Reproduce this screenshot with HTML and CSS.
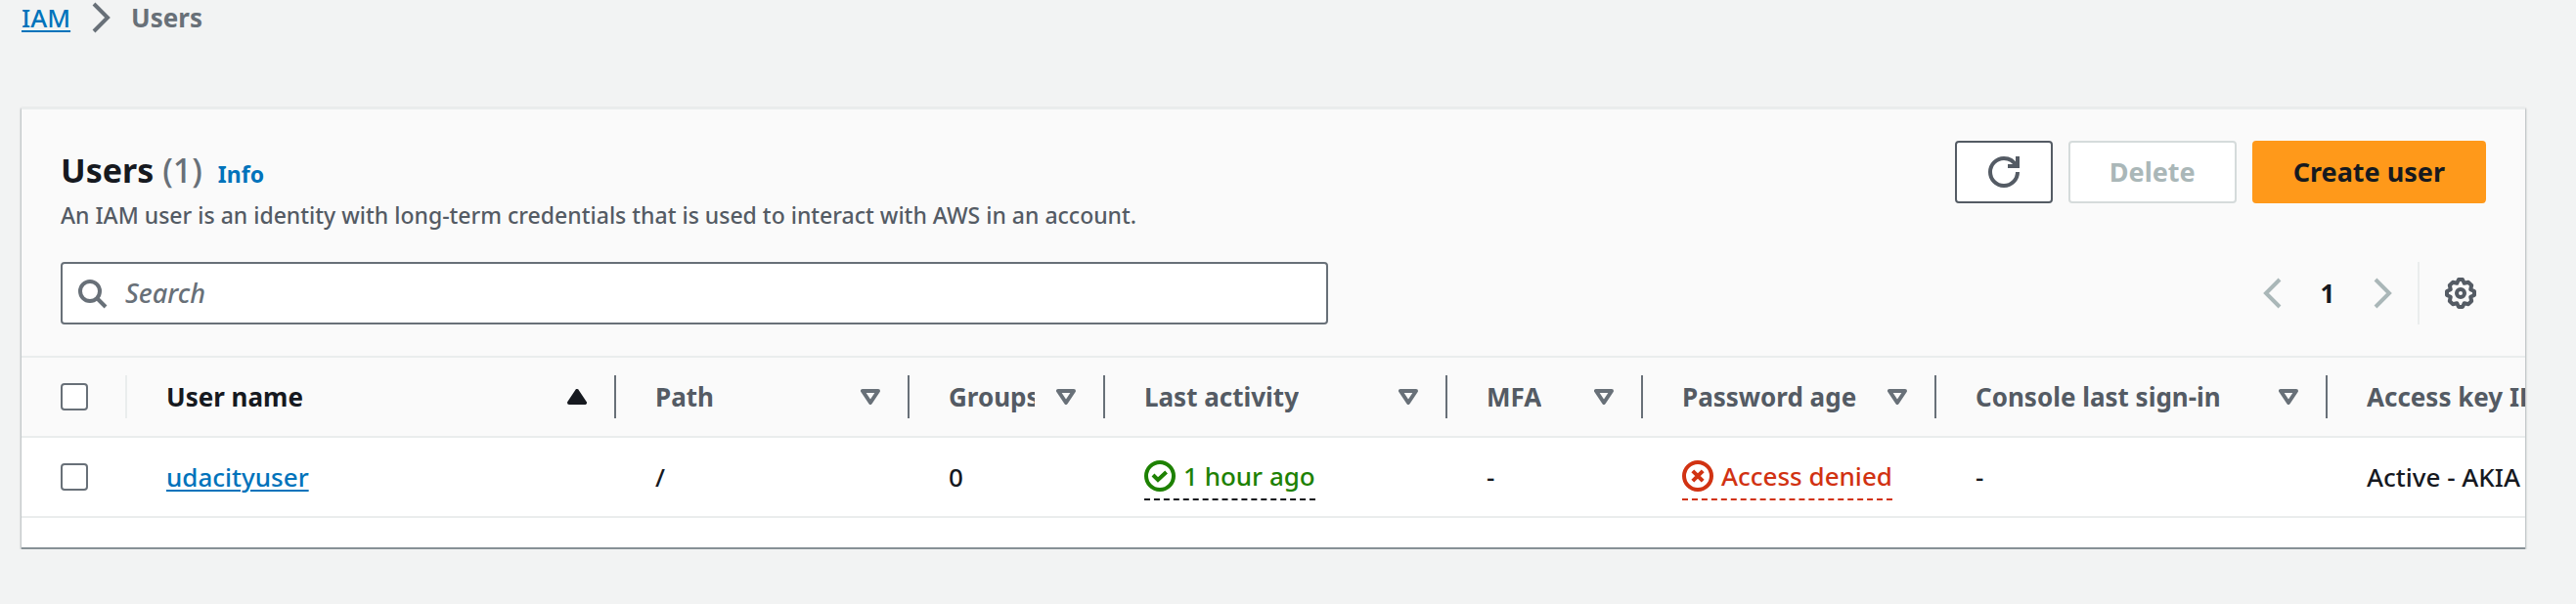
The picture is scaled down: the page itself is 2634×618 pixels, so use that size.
FILE: index.html
```html
<!DOCTYPE html>
<html lang="en">
<head>
<meta charset="utf-8">
<title>Users | IAM</title>
<link rel="stylesheet" href="styles.css">
</head>
<body>
<nav class="breadcrumb" aria-label="Breadcrumb">
  <a href="#">IAM</a>
  <svg class="icon" viewBox="0 0 16 16" aria-hidden="true"><path d="M4.500 1l7 7-7 7"/></svg>
  <span class="breadcrumb-current">Users</span>
</nav>
<main class="card">
  <header class="card-header">
    <div class="title-row">
      <div class="title-block">
        <div class="title-line">
          <h1 class="title">Users <span class="count">(1)</span></h1>
          <a class="info" href="#">Info</a>
        </div>
        <p class="description">An IAM user is an identity with long-term credentials that is used to interact with AWS in an account.</p>
      </div>
      <div class="actions">
        <button class="btn btn-icon" type="button" aria-label="Refresh">
          <svg class="icon" viewBox="0 0 16 16" aria-hidden="true"><path d="M15 8c0 3.870-3.130 7-7 7s-7-3.130-7-7 3.130-7 7-7c2.790 0 5.200 1.630 6.330 4"/><path d="M10 5h5V0"/></svg>
        </button>
        <button class="btn btn-disabled" type="button" disabled>Delete</button>
        <button class="btn btn-primary" type="button">Create user</button>
      </div>
    </div>
    <div class="tools-row">
      <label class="search">
        <svg class="icon" viewBox="0 0 16 16" aria-hidden="true"><circle cx="7" cy="7" r="5"/><path d="M10.500 10.500L15 15"/></svg>
        <input class="search-input" type="text" placeholder="Search" aria-label="Search">
      </label>
      <div class="pager">
        <button class="ghost ghost-muted" type="button" aria-label="Previous page" disabled><svg class="icon" viewBox="0 0 16 16" aria-hidden="true"><path d="M11.500 1l-7 7 7 7"/></svg></button>
        <button class="ghost page-number" type="button">1</button>
        <button class="ghost ghost-muted" type="button" aria-label="Next page" disabled><svg class="icon" viewBox="0 0 16 16" aria-hidden="true"><path d="M4.500 1l7 7-7 7"/></svg></button>
        <button class="ghost preferences" type="button" aria-label="Preferences"><svg class="icon icon-round" viewBox="0 0 16 16" aria-hidden="true"><path d="M7 1h2l.9 1.900L12 2.400 13.600 4l-.5 2.100L15 7v2l-1.900.9.5 2.100L12 13.600l-2.100-.5L9 15H7l-.9-1.900-2.100.5L2.400 12l.5-2.100L1 9V7l1.900-.9L2.400 4 4 2.400l2.100.5z"/><circle cx="8" cy="8" r="2"/></svg></button>
      </div>
    </div>
  </header>
  <div class="table-wrap">
    <table class="table">
      <colgroup>
        <col class="col-select"><col class="col-name"><col class="col-path"><col class="col-groups"><col class="col-activity"><col class="col-mfa"><col class="col-password"><col class="col-console"><col class="col-key">
      </colgroup>
      <thead>
        <tr>
          <th scope="col"><div class="head head-select"><input class="check" type="checkbox" aria-label="Select all users"></div></th>
          <th scope="col" aria-sort="ascending"><div class="head head-sorted"><span class="head-text">User name</span><svg class="sort" viewBox="0 0 10 8" aria-hidden="true"><path class="solid" d="M5 1L9 7H1z"/></svg></div></th>
          <th scope="col"><div class="head"><span class="head-text">Path</span><svg class="sort" viewBox="0 0 10 8" aria-hidden="true"><path d="M1 1h8L5 7z"/></svg></div></th>
          <th scope="col"><div class="head"><span class="head-text">Groups</span><svg class="sort" viewBox="0 0 10 8" aria-hidden="true"><path d="M1 1h8L5 7z"/></svg></div></th>
          <th scope="col"><div class="head"><span class="head-text">Last activity</span><svg class="sort" viewBox="0 0 10 8" aria-hidden="true"><path d="M1 1h8L5 7z"/></svg></div></th>
          <th scope="col"><div class="head"><span class="head-text">MFA</span><svg class="sort" viewBox="0 0 10 8" aria-hidden="true"><path d="M1 1h8L5 7z"/></svg></div></th>
          <th scope="col"><div class="head"><span class="head-text">Password age</span><svg class="sort" viewBox="0 0 10 8" aria-hidden="true"><path d="M1 1h8L5 7z"/></svg></div></th>
          <th scope="col"><div class="head"><span class="head-text">Console last sign-in</span><svg class="sort" viewBox="0 0 10 8" aria-hidden="true"><path d="M1 1h8L5 7z"/></svg></div></th>
          <th scope="col"><div class="head"><span class="head-text">Access key ID</span></div></th>
        </tr>
      </thead>
      <tbody>
        <tr>
          <td><input class="check" type="checkbox" aria-label="Select udacityuser"></td>
          <td><a href="#">udacityuser</a></td>
          <td>/</td>
          <td>0</td>
          <td><div class="status status-ok"><svg class="icon" viewBox="0 0 16 16" aria-hidden="true"><circle cx="8" cy="8" r="7"/><path d="M4.500 7.500L7 10l4.300-4"/></svg><span>1 hour ago</span></div></td>
          <td>-</td>
          <td><div class="status status-error"><svg class="icon" viewBox="0 0 16 16" aria-hidden="true"><circle cx="8" cy="8" r="7"/><path d="M5.400 5.400l5.200 5.200M10.600 5.400l-5.200 5.200"/></svg><span>Access denied</span></div></td>
          <td>-</td>
          <td>Active - AKIA</td>
        </tr>
      </tbody>
    </table>
  </div>
</main>
</body>
</html>
```
FILE: styles.css
```css
* { box-sizing: border-box; }
body {
  margin: 0;
  padding: 0 52px 0 22px;
  background: #f2f3f3;
  color: #16191f;
  font-family: "Noto Sans", "Open Sans", sans-serif;
  font-size: 26px;
  font-weight: 500;
  line-height: 36px;
}
a { color: #0073bb; text-decoration-thickness: 2px; text-underline-offset: 3px; }
button, input { font: inherit; margin: 0; }
.icon { display: block; flex: none; width: 32px; height: 32px; fill: none; stroke: currentColor; stroke-width: 2; }
.icon-round { stroke-linejoin: round; }

.breadcrumb { display: flex; align-items: center; gap: 15px; height: 36px; color: #687078; }
.breadcrumb-current { font-weight: 700; }

.card {
  margin-top: 74px;
  border-top: 2px solid #eaeded;
  border-bottom: 2px solid #879196;
  padding-bottom: 30px;
  background: #fff;
  box-shadow: 0 1px 2px 0 rgba(0, 28, 36, 0.3), 1px 1px 2px 0 rgba(0, 28, 36, 0.15), -1px 1px 2px 0 rgba(0, 28, 36, 0.15);
}
.card-header { padding: 32px 40px; background: #fafafa; }
.title-row, .tools-row { display: flex; justify-content: space-between; align-items: flex-start; }
.title-line { display: flex; align-items: baseline; gap: 16px; }
.title { margin: 0; padding-top: 8px; font-size: 34px; line-height: 44px; font-weight: 700; }
.count { font-weight: 500; color: #687078; }
.info { font-size: 23px; font-weight: 700; text-decoration: none; }
.description { margin: 8px 0 0; font-size: 23px; line-height: 32px; color: #545b64; }
.actions { display: flex; gap: 16px; }
.btn {
  display: flex; align-items: center; justify-content: center;
  height: 64px; padding: 0 40px;
  border: 2px solid #545b64; border-radius: 4px;
  background: #fff; color: #545b64; font-size: 27px; font-weight: 700;
}
.btn-icon { padding: 0 32px; }
.btn-disabled { border-color: #d5dbdb; color: #aab7b8; }
.btn-primary { border-color: #ff991a; background: #ff991a; color: #16191f; }

.tools-row { margin-top: 32px; }
.search {
  display: flex; align-items: center; gap: 18px;
  width: 1296px; height: 64px; padding: 0 14px;
  border: 2px solid #687078; border-radius: 4px;
  background: #fff; color: #687078;
}
.search-input { flex: 1; min-width: 0; border: 0; padding: 0; outline: 0; background: transparent; font-size: 27px; }
.search-input::placeholder { color: #687078; font-style: italic; opacity: 1; }
.pager { display: flex; align-items: center; gap: 16px; }
.ghost { display: flex; align-items: center; justify-content: center; padding: 0; border: 0; background: none; color: #545b64; }
.ghost-muted { color: #aab7b8; }
.page-number { width: 48px; color: #16191f; font-weight: 700; }
.preferences { height: 64px; margin-left: 4px; padding: 0 10px 0 26px; border-left: 2px solid #eaeded; }

.table-wrap { overflow: hidden; }
.table { width: 2758px; table-layout: fixed; border-collapse: separate; border-spacing: 0; }
.col-select { width: 108px; }
.col-name { width: 500px; }
.col-path, .col-password { width: 300px; }
.col-groups, .col-mfa { width: 200px; }
.col-activity { width: 350px; }
.col-console, .col-key { width: 400px; }
th { padding: 18px 0; border-top: 2px solid #eaeded; border-bottom: 2px solid #eaeded; background: #fafafa; color: #545b64; font-weight: 700; text-align: left; }
.head { display: flex; align-items: center; justify-content: space-between; gap: 22px; height: 44px; padding: 0 28px 0 40px; border-right: 2px solid #687078; }
.head-text { overflow: hidden; white-space: nowrap; }
.head-select { border-right-color: #eaeded; }
.head-sorted { color: #16191f; }
.sort { flex: none; width: 20px; height: 16px; fill: none; stroke: #687078; stroke-width: 2; stroke-linejoin: round; }
.solid { fill: #16191f; stroke: #16191f; }
td { height: 82px; padding: 0 40px; border-bottom: 2px solid #eaeded; white-space: nowrap; }
.check { appearance: none; display: block; width: 28px; height: 28px; border: 2px solid #687078; border-radius: 4px; background: #fff; }
.status { display: flex; align-items: center; gap: 8px; width: fit-content; height: 48px; border-bottom: 2px dashed #16191f; }
.status-ok { color: #1d8102; border-bottom-color: #16191f; }
.status-error { color: #d13212; border-bottom-color: #d13212; }
```
